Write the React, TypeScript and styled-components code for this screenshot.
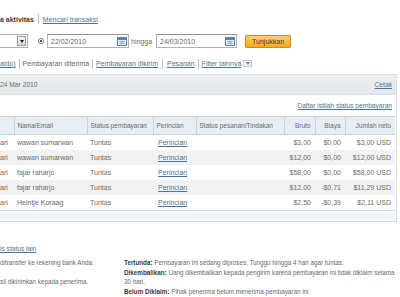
import styled, { createGlobalStyle } from "styled-components";

const GlobalStyle = createGlobalStyle`
  html, body {
    background: #ffffff;
    margin: 0;
    padding: 0;
  }
  body {
    color: #6a6a6a;
    font-family: "Liberation Sans", Arial, sans-serif;
    font-size: 7px;
    overflow: hidden;
  }
`;

const Page = styled.div`
  width: 400px;
  height: 297px;
  overflow: hidden;
`;

const NavRow = styled.div`
  align-items: center;
  display: flex;
  height: 12px;
  margin-top: 13px;
`;

const Title = styled.span`
  color: #3a3a3a;
  font-weight: bold;
`;

const Sep = styled.span<{ $gap?: number }>`
  background: #b9c0c8;
  display: inline-block;
  height: 10px;
  margin: 0 ${p => p.$gap ?? 3}px;
  width: 1px;
`;

const TextLink = styled.a`
  color: #4a7596;
  cursor: pointer;
  text-decoration: underline;
`;

const FilterRow = styled.div`
  align-items: center;
  display: flex;
  height: 14px;
  margin-top: 9px;
`;

const Select = styled.div`
  background: #ffffff;
  border: 1px solid #a9b1ba;
  border-left: none;
  box-sizing: border-box;
  display: flex;
  height: 14px;
  justify-content: flex-end;
  padding: 1px;
  width: 28px;
`;

const SelectButton = styled.div`
  align-items: center;
  background: linear-gradient(#f4f4f4, #d6d6d6);
  border: 1px solid #9a9a9a;
  box-sizing: border-box;
  display: flex;
  justify-content: center;
  width: 9px;
`;

const Arrow = styled.span<{ $color?: string }>`
  border-left: 2.5px solid transparent;
  border-right: 2.5px solid transparent;
  border-top: 3px solid ${p => p.$color ?? "#222"};
  height: 0;
  width: 0;
`;

const Radio = styled.span`
  align-items: center;
  border: 1px solid #777;
  border-radius: 50%;
  box-sizing: border-box;
  display: flex;
  height: 6px;
  justify-content: center;
  margin: 0 3px 0 10px;
  width: 6px;

  &::after {
    background: #222;
    border-radius: 50%;
    content: "";
    height: 2px;
    width: 2px;
  }
`;

const DateBox = styled.div<{ $width: number }>`
  align-items: center;
  background: #ffffff;
  border: 1px solid #aab2bb;
  border-top-color: #8c959f;
  box-sizing: border-box;
  color: #6a6a6a;
  display: flex;
  height: 14px;
  justify-content: space-between;
  padding: 0 1px 0 3px;
  width: ${p => p.$width}px;
`;

const Label = styled.span`
  margin: 0 4px 0 2px;
`;

const ShowButton = styled.button`
  background: linear-gradient(#ffd36b, #f7a81c);
  border: 1px solid #d58b12;
  border-radius: 1px;
  color: #3a3a3a;
  font-family: inherit;
  font-size: 7px;
  height: 13px;
  line-height: 11px;
  margin-left: 8px;
  padding: 0 6px;
`;

const FilterLinks = styled.div`
  align-items: center;
  display: flex;
  height: 13px;
  margin-top: 9px;
`;

const DropBox = styled.span`
  align-items: center;
  background: linear-gradient(#ffffff, #e8edf2);
  border: 1px solid #c4ccd5;
  box-sizing: border-box;
  display: inline-flex;
  height: 7px;
  justify-content: center;
  margin-left: 2px;
  width: 9px;
`;

const Panel = styled.div`
  border: 1px solid #d6dbe1;
  border-left: none;
  margin-top: 4px;
  width: 396px;
`;

const PanelHeader = styled.div`
  align-items: center;
  background: linear-gradient(#eef0f3, #e3e7eb);
  border-bottom: 1px solid #dbe0e6;
  display: flex;
  font-size: 6.7px;
  height: 19px;
  justify-content: space-between;
  padding-right: 4px;
`;

const GlossaryRow = styled.div`
  align-items: center;
  display: flex;
  font-size: 6.6px;
  height: 21px;
  justify-content: flex-end;
  padding-right: 4px;
`;

const Table = styled.table`
  border-collapse: collapse;
  table-layout: fixed;
  width: 395px;
`;

const Th = styled.th<{ $right?: boolean }>`
  background: #e6edf5;
  border: 1px solid #c9d3de;
  border-left: none;
  color: #6a6a6a;
  font-size: 6.5px;
  font-weight: normal;
  height: 17px;
  overflow: hidden;
  padding: 0 ${p => (p.$right ? 4 : 0)}px 0 ${p => (p.$right ? 0 : 3)}px;
  text-align: ${p => (p.$right ? "right" : "left")};
  white-space: nowrap;

  &:last-child {
    border-right: none;
  }
`;

const Tr = styled.tr<{ $shade: boolean }>`
  background: ${p => (p.$shade ? "#f2f2f2" : "#ffffff")};
`;

const Td = styled.td<{ $right?: boolean; $pad?: number }>`
  color: #6a6a6a;
  height: 15px;
  overflow: hidden;
  padding: 0 ${p => (p.$right ? 4 : 0)}px 0 ${p => p.$pad ?? 3}px;
  text-align: ${p => (p.$right ? "right" : "left")};
  white-space: nowrap;
`;

const PanelFooter = styled.div`
  background: #f4f7fa;
  border-top: 1px solid #d6dbe1;
  height: 10px;
`;

const MoreRow = styled.div`
  font-size: 6.6px;
  margin-top: 23px;
`;

const Legend = styled.div`
  display: grid;
  font-size: 6.3px;
  grid-template-columns: 124px 1fr;
  line-height: 9.7px;
  margin-top: 6px;
`;

const LegendColumn = styled.div`
  display: flex;
  flex-direction: column;
  white-space: nowrap;
`;

const LegendItem = styled.div<{ $skip?: boolean }>`
  margin-top: ${p => (p.$skip ? 9.7 : 0)}px;
`;

const Term = styled.b`
  color: #3a3a3a;
`;

function CalendarIcon() {
  return (
    <svg width="10" height="9" viewBox="0 0 10 9">
      <rect x="0.5" y="0.5" width="9" height="8" fill="#eef3f9" stroke="#5c83ad" />
      <rect x="1" y="1" width="8" height="2" fill="#5c83ad" />
      <path d="M2 4.5h6M2 6.5h6M4 3.5v4M6 3.5v4" stroke="#8aa6c4" strokeWidth="0.8" />
    </svg>
  );
}

const rows = [
  { name: "wawan sumarwan", bruto: "$3,00", fee: "$0,00", net: "$3,00 USD" },
  { name: "wawan sumarwan", bruto: "$12,00", fee: "$0,00", net: "$12,00 USD" },
  { name: "fajar raharjo", bruto: "$58,00", fee: "$0,00", net: "$58,00 USD" },
  { name: "fajar raharjo", bruto: "$12,00", fee: "-$0,71", net: "$11,29 USD" },
  { name: "Heintje Koraag", bruto: "$2,50", fee: "-$0,39", net: "$2,11 USD" },
];

export default function App() {
  return (
    <Page>
      <GlobalStyle />
      <NavRow>
        <Title>a aktivitas</Title>
        <Sep $gap={4} />
        <TextLink>Mencari transaksi</TextLink>
      </NavRow>

      <FilterRow>
        <Select>
          <SelectButton><Arrow /></SelectButton>
        </Select>
        <Radio />
        <DateBox $width={82}>22/02/2010<CalendarIcon /></DateBox>
        <Label>hingga</Label>
        <DateBox $width={81}>24/03/2010<CalendarIcon /></DateBox>
        <ShowButton>Tunjukkan</ShowButton>
      </FilterRow>

      <FilterLinks>
        <TextLink>aldo)</TextLink>
        <Sep />
        <span>Pembayaran diterima</span>
        <Sep />
        <TextLink>Pembayaran dikirim</TextLink>
        <Sep $gap={4} />
        <TextLink>Pesanan</TextLink>
        <Sep />
        <TextLink>Filter lainnya</TextLink>
        <DropBox><Arrow $color="#6a88a8" /></DropBox>
      </FilterLinks>

      <Panel>
        <PanelHeader>
          <span>24 Mar 2010</span>
          <TextLink>Cetak</TextLink>
        </PanelHeader>
        <GlossaryRow>
          <TextLink>Daftar istilah status pembayaran</TextLink>
        </GlossaryRow>
        <Table>
          <colgroup>
            <col style={{ width: 14 }} />
            <col style={{ width: 73 }} />
            <col style={{ width: 66 }} />
            <col style={{ width: 43 }} />
            <col style={{ width: 88 }} />
            <col style={{ width: 31 }} />
            <col style={{ width: 30 }} />
            <col style={{ width: 50 }} />
          </colgroup>
          <thead>
            <tr>
              <Th />
              <Th>Nama/Email</Th>
              <Th>Status pembayaran</Th>
              <Th>Perincian</Th>
              <Th>Status pesanan/Tindakan</Th>
              <Th $right>Bruto</Th>
              <Th $right>Biaya</Th>
              <Th $right>Jumlah neto</Th>
            </tr>
          </thead>
          <tbody>
            {rows.map((r, i) => (
              <Tr key={i} $shade={i % 2 === 1}>
                <Td $pad={0}>ari</Td>
                <Td>{r.name}</Td>
                <Td>Tuntas</Td>
                <Td $pad={5}><TextLink>Perincian</TextLink></Td>
                <Td />
                <Td $right>{r.bruto}</Td>
                <Td $right>{r.fee}</Td>
                <Td $right>{r.net}</Td>
              </Tr>
            ))}
          </tbody>
        </Table>
        <PanelFooter />
      </Panel>

      <MoreRow>
        <TextLink>is status lain</TextLink>
      </MoreRow>

      <Legend>
        <LegendColumn>
          <LegendItem>ditransfer ke rekening bank Anda.</LegendItem>
          <LegendItem $skip>sil dikirimkan kepada penerima.</LegendItem>
        </LegendColumn>
        <LegendColumn>
          <LegendItem><Term>Tertunda:</Term> Pembayaran ini sedang diproses. Tunggu hingga 4 hari agar tuntas.</LegendItem>
          <LegendItem>
            <Term>Dikembalikan:</Term> Uang dikembalikan kepada pengirim karena pembayaran ini tidak diklaim selama
            <br />30 hari.
          </LegendItem>
          <LegendItem><Term>Belum Diklaim:</Term> Pihak penerima belum menerima pembayaran ini.</LegendItem>
        </LegendColumn>
      </Legend>
    </Page>
  );
}
